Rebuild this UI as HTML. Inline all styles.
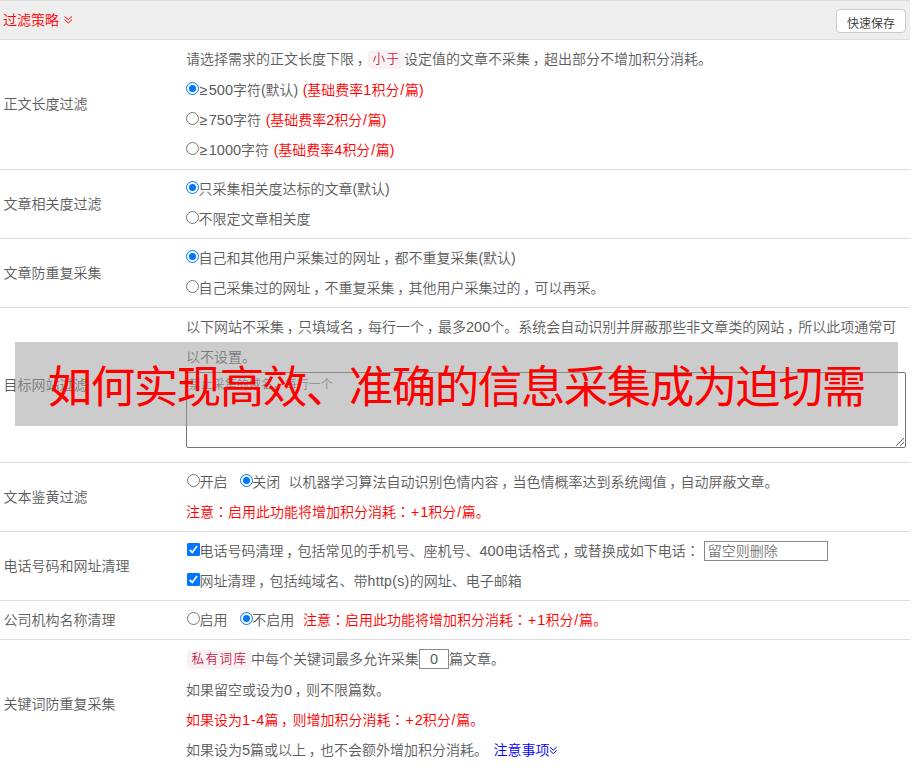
<!DOCTYPE html>
<html lang="zh-CN">
<head>
<meta charset="utf-8">
<title>过滤策略</title>
<style>
*{box-sizing:border-box;}
html,body{margin:0;padding:0;background:#fff;}
body{width:912px;height:768px;overflow:hidden;position:relative;
  font-family:"Liberation Sans","Noto Sans CJK SC",sans-serif;font-size:14px;line-height:30px;color:#5c5c5c;word-spacing:.2px;font-weight:350;}
.tb{width:910px;}
.hd{height:40px;background:#eee;border-top:1px solid #ddd;border-bottom:1px solid #ddd;padding-left:3px;color:#f00;position:relative;line-height:38px;}
.hd svg{position:absolute;left:63px;top:13px;}
.row{display:flex;align-items:center;border-bottom:1px solid #ddd;padding:4px;}
.row .l{width:182px;flex:none;white-space:nowrap;text-indent:-.6px;}
.row .c{width:720px;flex:none;align-self:flex-start;}
.ln{height:30px;white-space:nowrap;position:relative;}
.red{color:#f00;}
span.red{margin-left:.6px;}
.blue{color:#00f;margin-left:1.4px;}
.d{font-size:14.5px;}
.ge{margin:0 1.3px;}
.p{letter-spacing:-.1px;}
.sl{margin:0 .8px;}
.pl{margin:0 1.05px;}
.hy{margin:0 .8px;}
.en{letter-spacing:.35px;}
.cm{position:relative;left:2.7px;}
.fs{position:relative;left:0;}
.cn{font-family:"Liberation Sans","Noto Sans CJK JP",sans-serif;}
code{display:inline-block;font-family:"Liberation Mono","Noto Sans CJK SC",monospace;font-size:12.6px;line-height:21px;height:19px;color:#c7254e;background:#f9f2f4;border-radius:4px;padding:0 3.5px 0 4.5px;letter-spacing:1.4px;vertical-align:middle;position:relative;top:-1px;word-spacing:0;}
.btn{font-family:inherit;font-weight:inherit;padding:0;margin:0;word-spacing:inherit;position:absolute;left:836px;top:8px;width:70px;height:24px;border:1px solid #ccc;border-radius:4px;background:#fff;color:#333;font-size:12px;line-height:28px;text-align:center;}
.rd{-webkit-appearance:none;appearance:none;padding:0;outline:0;display:inline-block;width:13px;height:13px;border:1px solid #767676;border-radius:50%;background:#fff;vertical-align:middle;position:relative;top:-3px;margin:0 -.5px 0 0;}
.rd.on{border-color:#0075ff;}
.rd.on:after{content:"";position:absolute;left:2px;top:2px;width:7px;height:7px;border-radius:50%;background:#0075ff;}
.cb{display:inline-block;width:13px;height:13px;border-radius:2px;background:#0075ff;vertical-align:middle;position:relative;top:-3px;margin:0 -.5px 0 0;}
.cb svg{position:absolute;left:0;top:0;pointer-events:none;}
.cb input{-webkit-appearance:none;appearance:none;position:absolute;left:0;top:0;width:13px;height:13px;margin:0;padding:0;border:0;border-radius:2px;background:#0075ff;outline:0;}
.m1{margin-left:1px;}
.ta{display:block;width:720px;height:76px;border:1px solid #767676;border-radius:2px;padding:4px 2px 2px 1.8px;font-size:12px;line-height:16px;color:#757575;background:#fff;position:relative;word-spacing:0;}
.ta svg{position:absolute;right:-1px;bottom:0;}
.inp{display:inline-block;border:1px solid #888;background:#fff;height:20px;vertical-align:middle;line-height:18px;font-size:14px;color:#757575;padding:0 3px;position:relative;top:-1px;border-radius:0;}
.ov{position:absolute;left:15px;top:342px;width:883px;height:84px;background:rgba(153,153,153,.5);}
.ovt{font-weight:400;position:absolute;left:15px;top:342px;width:883px;height:84px;color:#f00;font-size:44.5px;letter-spacing:-1.5px;text-indent:-.5px;line-height:91.6px;text-align:center;white-space:nowrap;overflow:hidden;}
.chev2{position:relative;display:inline-block;width:8px;height:10px;}
.chev2 svg{position:absolute;left:-1px;top:1.3px;}
</style>
</head>
<body>
<div class="tb">
<div class="hd">过滤策略<svg width="11" height="11" viewBox="0 0 11 11"><path d="M1.5 2.5L5.25 5.6L9 2.5M1.5 5.6L5.25 9L9 5.6" fill="none" stroke="#f00" stroke-width="0.95"/></svg><button type="button" class="btn">快速保存</button></div>
<div class="row" style="height:130px"><div class="l" style="position:relative;top:-1px">正文长度过滤</div><div class="c">
<div class="ln" style="height:31px">请选择需求的正文长度下限<span class="cm">，</span><code>小于</code>设定值的文章不采集<span class="cm">，</span>超出部分不增加积分消耗<span class="fs">。</span></div>
<div class="ln"><input type="radio" class="rd on" checked><span class="ge">≥</span><span class="d">500</span>字符<span class="p">(</span>默认<span class="p">)</span> <span class="red"><span class="p">(</span>基础费率<span class="d">1</span>积分<span class="sl">/</span>篇<span class="p">)</span></span></div>
<div class="ln"><input type="radio" class="rd"><span class="ge">≥</span><span class="d">750</span>字符 <span class="red"><span class="p">(</span>基础费率<span class="d">2</span>积分<span class="sl">/</span>篇<span class="p">)</span></span></div>
<div class="ln"><input type="radio" class="rd"><span class="ge">≥</span><span class="d">1000</span>字符 <span class="red"><span class="p">(</span>基础费率<span class="d">4</span>积分<span class="sl">/</span>篇<span class="p">)</span></span></div>
</div></div>
<div class="row" style="height:69px"><div class="l">文章相关度过滤</div><div class="c">
<div class="ln"><input type="radio" class="rd on" checked>只采集相关度达标的文章<span class="p">(</span>默认<span class="p">)</span></div>
<div class="ln"><input type="radio" class="rd">不限定文章相关度</div>
</div></div>
<div class="row" style="height:69px"><div class="l">文章防重复采集</div><div class="c">
<div class="ln"><input type="radio" class="rd on" checked>自己和其他用户采集过的网址<span class="cm">，</span>都不重复采集<span class="p">(</span>默认<span class="p">)</span></div>
<div class="ln"><input type="radio" class="rd">自己采集过的网址<span class="cm">，</span>不重复采集<span class="cm">，</span>其他用户采集过的<span class="cm">，</span>可以再采<span class="fs">。</span></div>
</div></div>
<div class="row" style="height:155px"><div class="l">目标网站过滤</div><div class="c">
<div class="ln">以下网站不采集<span class="cm">，</span>只填域名<span class="cm">，</span>每行一个<span class="cm">，</span>最多<span class="d">200</span>个<span class="fs">。</span>系统会自动识别并屏蔽那些非文章类的网站<span class="cm">，</span>所以此项通常可</div>
<div class="ln">以不设置<span class="fs">。</span></div>
<div class="ta">禁止采集的域名，每行一个<svg width="12" height="12" viewBox="0 0 12 12"><path d="M2.2 10.8L10 3.2M6.2 10.8L10 7.2" fill="none" stroke="#555" stroke-width="1"/></svg></div>
</div></div>
<div class="row" style="height:69px"><div class="l">文本鉴黄过滤</div><div class="c">
<div class="ln"><input type="radio" class="rd m1">开启 &nbsp; <input type="radio" class="rd on" checked>关闭 &nbsp;以机器学习算法自动识别色情内容<span class="cm">，</span>当色情概率达到系统阈值<span class="cm">，</span>自动屏蔽文章<span class="fs">。</span></div>
<div class="ln red">注意<span class="cn" lang="ja">：</span>启用此功能将增加积分消耗<span class="cn" lang="ja">：</span><span class="pl">+</span><span class="d">1</span>积分<span class="sl">/</span>篇<span class="fs">。</span></div>
</div></div>
<div class="row" style="height:69px"><div class="l">电话号码和网址清理</div><div class="c">
<div class="ln"><span class="cb m1"><input type="checkbox" checked><svg width="13" height="13" viewBox="0 0 13 13"><path d="M2.7 6.9L5.2 9.4L10.1 3" fill="none" stroke="#fff" stroke-width="1.7"/></svg></span>电话号码清理<span class="cm">，</span>包括常见的手机号、座机号、<span class="d">400</span>电话格式<span class="cm">，</span>或替换成如下电话<span class="cn" lang="ja">：</span> <span class="inp" style="width:124px">留空则删除</span></div>
<div class="ln"><span class="cb m1"><input type="checkbox" checked><svg width="13" height="13" viewBox="0 0 13 13"><path d="M2.7 6.9L5.2 9.4L10.1 3" fill="none" stroke="#fff" stroke-width="1.7"/></svg></span>网址清理<span class="cm">，</span>包括纯域名、带<span class="en">http(s)</span>的网址、电子邮箱</div>
</div></div>
<div class="row" style="height:39px"><div class="l">公司机构名称清理</div><div class="c">
<div class="ln"><input type="radio" class="rd m1">启用 &nbsp; <input type="radio" class="rd on" checked>不启用 &nbsp;<span class="red">注意<span class="cn" lang="ja">：</span>启用此功能将增加积分消耗<span class="cn" lang="ja">：</span><span class="pl">+</span><span class="d">1</span>积分<span class="sl">/</span>篇<span class="fs">。</span></span></div>
</div></div>
<div class="row" style="height:130px"><div class="l" style="position:relative;top:-1px">关键词防重复采集</div><div class="c">
<div class="ln" style="height:31px"><code class="m1">私有词库</code>中每个关键词最多允许采集<span class="inp" style="width:30px;text-align:center;color:#5c5c5c;padding:0"><span class="d">0</span></span>篇文章<span class="fs">。</span></div>
<div class="ln">如果留空或设为<span class="d">0</span><span class="cm">，</span>则不限篇数<span class="fs">。</span></div>
<div class="ln red">如果设为<span class="d">1</span><span class="hy">-</span><span class="d">4</span>篇<span class="cm">，</span>则增加积分消耗<span class="cn" lang="ja">：</span><span class="pl">+</span><span class="d">2</span>积分<span class="sl">/</span>篇<span class="fs">。</span></div>
<div class="ln">如果设为<span class="d">5</span>篇或以上<span class="cm">，</span>也不会额外增加积分消耗<span class="fs">。</span> <a class="blue">注意事项<span class="chev2"><svg width="9" height="10" viewBox="0 0 9 10"><path d="M0.8 1.2L4.2 4.2L7.6 1.2M0.8 4.4L4.2 7.6L7.6 4.4" fill="none" stroke="#00f" stroke-width="1"/></svg></span></a></div>
</div></div>
</div>
<div class="ov"></div>
<div class="ovt">如何实现高效、准确的信息采集成为迫切需</div>
</body>
</html>
